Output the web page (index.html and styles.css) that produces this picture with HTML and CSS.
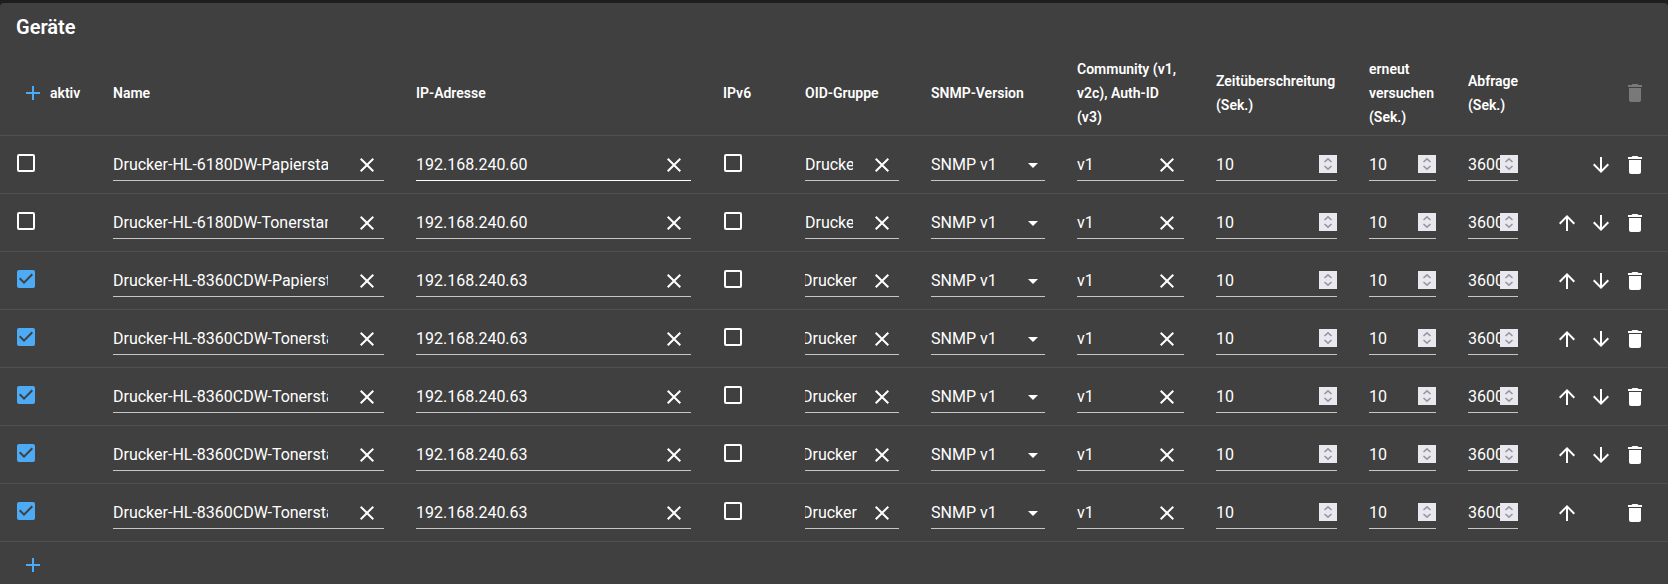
FILE: index.html
```html
<!DOCTYPE html>
<html lang="de">
<head>
    <meta charset="UTF-8">
    <meta name="viewport" content="width=device-width, initial-scale=1.0">
    <title>SNMP - Geräte</title>
    <link rel="stylesheet" href="styles.css">
</head>
<body>
    <!-- Icons -->
    <svg class="sprite" aria-hidden="true">
        <symbol id="add" viewBox="0 0 24 24"><path d="M19 13h-6v6h-2v-6H5v-2h6V5h2v6h6v2z"/></symbol>
        <symbol id="close" viewBox="0 0 24 24"><path d="M19 6.41L17.59 5 12 10.59 6.41 5 5 6.41 10.59 12 5 17.59 6.41 19 12 13.41 17.59 19 19 17.59 13.41 12z"/></symbol>
        <symbol id="delete" viewBox="0 0 24 24"><path d="M6 19c0 1.1.9 2 2 2h8c1.1 0 2-.9 2-2V7H6v12zM19 4h-3.5l-1-1h-5l-1 1H5v2h14V4z"/></symbol>
        <symbol id="up" viewBox="0 0 24 24"><path d="M4 12l1.41 1.41L11 7.83V20h2V7.83l5.58 5.59L20 12l-8-8-8 8z"/></symbol>
        <symbol id="down" viewBox="0 0 24 24"><path d="M20 12l-1.41-1.41L13 16.17V4h-2v12.17l-5.58-5.59L4 12l8 8 8-8z"/></symbol>
        <symbol id="drop" viewBox="0 0 24 24"><path d="M7 10l5 5 5-5z"/></symbol>
        <symbol id="spin" viewBox="0 0 18 18"><path d="M5.5 7L9 3.8 12.5 7M5.5 11L9 14.2 12.5 11" fill="none" stroke="#9795a3" stroke-width="1.6"/></symbol>
    </svg>

    <main class="card">
        <h1 class="card-title">Geräte</h1>

        <div class="table-container">
            <table>
                <colgroup>
                    <col class="col-active">
                    <col class="col-name">
                    <col>
                    <col class="col-ipv6">
                    <col class="col-oid">
                    <col class="col-version">
                    <col class="col-community">
                    <col class="col-timeout">
                    <col class="col-retry">
                    <col class="col-poll">
                    <col class="col-actions">
                </colgroup>
                <thead>
                    <tr>
                        <th>
                            <div class="add-head">
                                <button class="icon-btn primary" type="button" aria-label="Hinzufügen"><svg><use href="#add"/></svg></button>
                                aktiv
                            </div>
                        </th>
                        <th>Name</th>
                        <th>IP-Adresse</th>
                        <th>IPv6</th>
                        <th>OID-Gruppe</th>
                        <th>SNMP-Version</th>
                        <th>Community (v1, v2c), Auth-ID (v3)</th>
                        <th>Zeitüberschreitung (Sek.)</th>
                        <th>erneut versuchen (Sek.)</th>
                        <th>Abfrage (Sek.)</th>
                        <th>
                            <div class="actions">
                                <button class="icon-btn" type="button" aria-label="Alle löschen" disabled><svg><use href="#delete"/></svg></button>
                            </div>
                        </th>
                    </tr>
                </thead>
                <tbody id="deviceRows"></tbody>
            </table>
        </div>

        <div class="card-footer">
            <button class="icon-btn primary" type="button" aria-label="Hinzufügen"><svg><use href="#add"/></svg></button>
        </div>
    </main>

    <script>
        const devices = [
            { active: false, name: 'Drucker-HL-6180DW-Papierstand', ip: '192.168.240.60', focus: true },
            { active: false, name: 'Drucker-HL-6180DW-Tonerstand', ip: '192.168.240.60' },
            { active: true, name: 'Drucker-HL-8360CDW-Papierstand', ip: '192.168.240.63', scrolled: true },
            { active: true, name: 'Drucker-HL-8360CDW-Tonerstand', ip: '192.168.240.63', scrolled: true },
            { active: true, name: 'Drucker-HL-8360CDW-Tonerstand', ip: '192.168.240.63', scrolled: true },
            { active: true, name: 'Drucker-HL-8360CDW-Tonerstand', ip: '192.168.240.63', scrolled: true },
            { active: true, name: 'Drucker-HL-8360CDW-Tonerstand', ip: '192.168.240.63', scrolled: true }
        ];

        function button(icon, label) {
            return `<button class="icon-btn" type="button" aria-label="${label}"><svg><use href="#${icon}"/></svg></button>`;
        }

        function textField(label, value, cls = '') {
            return `<div class="field ${cls}">
                <input type="text" aria-label="${label}" value="${value}">
                ${button('close', 'Leeren')}
            </div>`;
        }

        function numberField(label, value) {
            return `<div class="field">
                <input type="number" aria-label="${label}" value="${value}">
                <svg class="spinner"><use href="#spin"/></svg>
            </div>`;
        }

        function deviceRow(d, i) {
            return `<tr>
                <td><input class="checkbox" type="checkbox" aria-label="aktiv" ${d.active ? 'checked' : ''}></td>
                <td>${textField('Name', d.name, 'name')}</td>
                <td>${textField('IP-Adresse', d.ip, d.focus ? 'highlight' : '')}</td>
                <td><input class="checkbox" type="checkbox" aria-label="IPv6"></td>
                <td>${textField('OID-Gruppe', 'Drucker', d.scrolled ? 'scrolled' : 'group')}</td>
                <td>
                    <div class="field">
                        <select aria-label="SNMP-Version">
                            <option>SNMP v1</option>
                            <option>SNMP v2c</option>
                            <option>SNMP v3</option>
                        </select>
                        <svg class="arrow"><use href="#drop"/></svg>
                    </div>
                </td>
                <td>${textField('Community', 'v1')}</td>
                <td>${numberField('Zeitüberschreitung', 10)}</td>
                <td>${numberField('erneut versuchen', 10)}</td>
                <td>${numberField('Abfrage', 3600)}</td>
                <td>
                    <div class="actions">
                        ${i > 0 ? button('up', 'Nach oben') : ''}
                        ${i < devices.length - 1 ? button('down', 'Nach unten') : '<span class="no-btn"></span>'}
                        ${button('delete', 'Löschen')}
                    </div>
                </td>
            </tr>`;
        }

        document.getElementById('deviceRows').innerHTML = devices.map(deviceRow).join('');

        // Show the end of the group name
        document.querySelectorAll('.scrolled input').forEach(input => {
            input.scrollLeft = input.scrollWidth;
        });
    </script>
</body>
</html>
```
FILE: styles.css
```css
* { box-sizing: border-box; }
body { margin: 0; padding-top: 3px; background: #1e1e1e; color: #fff; font-family: Roboto, sans-serif; font-size: 16px; }
svg { display: block; width: 24px; height: 24px; fill: currentColor; }
.sprite { display: none; }

.card { background: #404040; border-radius: 4px; }
.card-title { margin: 0; padding: 8px 16px; font-size: 20px; font-weight: 600; line-height: 32px; }
.card-footer { padding: 6px 16px; }

.table-container { overflow-x: auto; }
table { width: 100%; min-width: 1500px; table-layout: fixed; border-collapse: separate; border-spacing: 0; }
th, td { text-align: left; vertical-align: middle; border-bottom: 1px solid #515151; }
th { padding: 6px 16px; font-size: 14px; font-weight: 600; line-height: 24px; }
td { padding: 13px 16px 12px; }
.col-active { width: 97px; }
.col-name { width: 303px; }
.col-ipv6 { width: 82px; }
.col-oid { width: 126px; }
.col-version { width: 146px; }
.col-community { width: 139px; }
.col-timeout { width: 153px; }
.col-retry { width: 99px; }
.col-poll { width: 82px; }
.col-actions { width: 134px; }

.add-head { display: flex; align-items: center; }
.actions { display: flex; justify-content: flex-end; }
.no-btn { width: 34px; }
.icon-btn { flex: none; display: flex; align-items: center; justify-content: center; width: 34px; height: 34px; padding: 0; border: none; border-radius: 50%; background: none; color: inherit; cursor: pointer; }
.icon-btn:disabled { color: rgba(255,255,255,0.3); cursor: default; }
.primary { color: #4dabf5; }
td .icon-btn { height: 32px; }

.field { position: relative; display: flex; height: 32px; border-bottom: 1px solid rgba(255,255,255,0.7); }
.field:hover, .highlight { border-color: #fff; }
.field input, .field select { flex: 1; min-width: 0; width: 100%; height: 31px; padding: 0; border: none; outline: none; background: none; color: inherit; font: inherit; appearance: none; }
.field select option { background: #404040; }
.field .icon-btn { margin-left: 8px; }
.name input { padding-right: 14px; }
.group input { padding-right: 4px; }
.arrow { position: absolute; right: 0; top: 4px; pointer-events: none; }
.spinner { position: absolute; right: 0; top: 6px; width: 18px; height: 18px; background: #e9e8ee; pointer-events: none; }
input[type="number"] { appearance: textfield; }
input[type="number"]::-webkit-inner-spin-button { display: none; }

.checkbox { display: block; width: 18px; height: 18px; margin: 0 0 4px 1px; appearance: none; border: 2px solid #fff; border-radius: 2px; cursor: pointer; }
.checkbox:checked { border: none; background: #4dabf5 url("data:image/svg+xml,%3Csvg xmlns='http://www.w3.org/2000/svg' viewBox='3 3 18 18'%3E%3Cpath fill='%23404040' d='M10 17l-5-5 1.41-1.41L10 14.17l7.59-7.59L19 8l-9 9z'/%3E%3C/svg%3E"); }
```
